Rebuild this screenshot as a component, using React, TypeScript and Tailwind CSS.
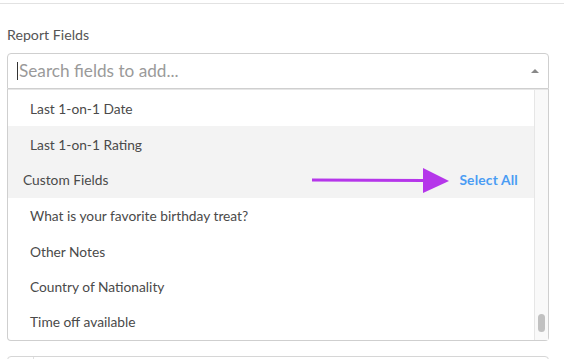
const ITEMS_TOP = ["Last 1-on-1 Date", "Last 1-on-1 Rating"];
const CUSTOM = [
  "What is your favorite birthday treat?",
  "Other Notes",
  "Country of Nationality",
  "Time off available",
];

export default function App() {
  return (
    <div
      className="h-[359px] w-[564px] overflow-hidden bg-white text-[#4a4a4a]"
      style={{ fontFamily: "Lato, 'Open Sans', sans-serif" }}
    >
      <div className="mt-[3px] border-t border-[#e2e2e2]" />

      <div className="px-[7px] pr-[15px]">
        <label className="mt-[23px] block text-[14.2px] leading-4 text-[#555]">Report Fields</label>

        <div className="mt-[10px]">
          <div className="flex h-[36px] items-center rounded-t-[4px] border border-[#cfcfcf] pl-[9px] pr-[8px]">
            <span className="h-[18px] w-px bg-[#333]" />
            <span className="ml-px flex-1 text-[17.2px] text-[#9a9a9a]">Search fields to add...</span>
            <span className="mr-[1px] h-0 w-0 border-x-[4px] border-b-[4px] border-x-transparent border-b-[#888]" />
          </div>

          <div className="flex h-[252px] rounded-b-[4px] border border-t-0 border-[#cfcfcf]">
            <div className="flex-1 overflow-hidden border-t border-[#e6e6e6]">
              <Row label={ITEMS_TOP[0]} />
              <Row label={ITEMS_TOP[1]} hover />
              <div className="flex h-[36px] items-center bg-[#f3f3f3] pl-[15px] pr-[16px] pt-[1px] text-[13.75px]">
                <span className="flex-1">Custom Fields</span>
                <svg width="138" height="26" viewBox="0 0 138 26" className="mr-[9px]">
                  <line x1="0" y1="12" x2="112" y2="12.5" stroke="#b536ea" strokeWidth="3" strokeLinecap="round" />
                  <polygon points="111,0 137,13 111,25" fill="#b536ea" />
                </svg>
                <span className="font-bold tracking-[0.2px] text-[#4a9cf3]">Select All</span>
              </div>
              {CUSTOM.map((c) => (
                <Row key={c} label={c} short />
              ))}
            </div>
            <div className="relative w-[14px] border-l border-t border-[#e6e6e6] bg-[#f9f9f9]">
              <div className="absolute left-[3px] top-[224px] h-[18px] w-[7px] rounded-full bg-[#c1c1c1]" />
            </div>
          </div>
        </div>

        <div className="mt-[15px] flex h-[20px] rounded-t-[4px] border border-[#d6d6d6]">
          <div className="w-[26px] border-r border-[#e0e0e0]" />
        </div>
      </div>
    </div>
  );
}

function Row({ label, hover, short }: { label: string; hover?: boolean; short?: boolean }) {
  return (
    <div
      className={`flex items-center pl-[22px] pt-[2px] text-[13.75px] ${short ? "h-[35.3px]" : "h-[36px]"} ${
        hover ? "bg-[#f3f3f3]" : ""
      }`}
    >
      {label}
    </div>
  );
}
